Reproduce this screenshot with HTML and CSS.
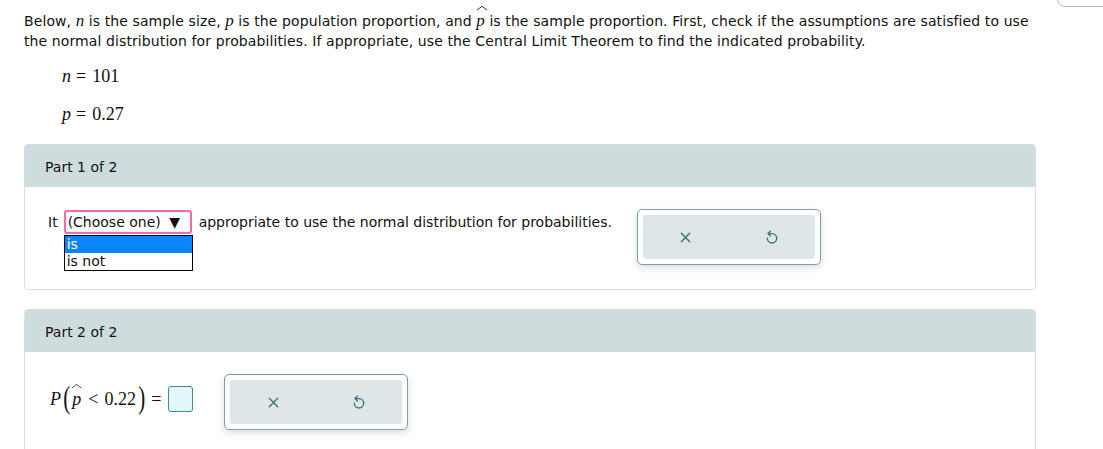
FILE: index.html
```html
<!DOCTYPE html>
<html>
<head>
<meta charset="utf-8">
<link rel="stylesheet" href="styles.css">
</head>
<body>
<div class="corner"></div>
<div class="page">
  <p class="intro"><span class="line">Below, <span class="mi">n</span> is the sample size, <span class="mi">p</span> is the population proportion, and <span class="hat"><span class="mi">p</span><svg class="hatsvg" viewBox="0 0 14 6"><path d="M1 5.5 L7 1 L13 5.5"/></svg></span> is the sample proportion. First, check if the assumptions are satisfied to use</span><span class="line">the normal distribution for probabilities. If appropriate, use the Central Limit Theorem to find the indicated probability.</span></p>
  <div class="given"><span class="mi">n</span><span class="eq">=</span>101</div>
  <div class="given"><span class="mi">p</span><span class="eq">=</span>0.27</div>

  <section class="panel">
    <div class="panel-head">Part 1 of 2</div>
    <div class="panel-body">
      <div class="sentence">
        <span>It</span>
        <span class="select-wrap">
          <span class="select">(Choose one) <span class="caret">▼</span></span>
          <span class="options">
            <span class="opt active">is</span>
            <span class="opt">is not</span>
          </span>
        </span>
        <span>appropriate to use the normal distribution for probabilities.</span>
      </div>
      <div class="tools">
        <div class="tools-inner">
          <span class="cell"><svg class="ic" viewBox="0 0 14 14"><path d="M2.5 2.5 L11.5 11.5 M11.5 2.5 L2.5 11.5" /></svg></span>
          <span class="cell"><svg class="ic undo" viewBox="0 0 14 14"><path d="M3.2 3.6 H7 A4.7 4.7 0 1 1 2.3 8.3" /><path d="M5.4 1.3 L3.1 3.6 L5.4 5.9" /></svg></span>
        </div>
      </div>
    </div>
  </section>

  <section class="panel panel2">
    <div class="panel-head">Part 2 of 2</div>
    <div class="panel-body body2">
      <div class="expr">
        <span class="mi">P</span><span class="paren">(</span><span class="hat2"><span class="mi">p</span><svg class="hatsvg2" viewBox="0 0 14 6"><path d="M1 5.5 L7 1 L13 5.5"/></svg></span><span class="lt">&lt;</span>0.22<span class="paren">)</span><span class="eq2">=</span><span class="answer"></span>
      </div>
      <div class="tools">
        <div class="tools-inner">
          <span class="cell"><svg class="ic" viewBox="0 0 14 14"><path d="M2.5 2.5 L11.5 11.5 M11.5 2.5 L2.5 11.5" /></svg></span>
          <span class="cell"><svg class="ic undo" viewBox="0 0 14 14"><path d="M3.2 3.6 H7 A4.7 4.7 0 1 1 2.3 8.3" /><path d="M5.4 1.3 L3.1 3.6 L5.4 5.9" /></svg></span>
        </div>
      </div>
    </div>
  </section>
</div>
</body>
</html>
```

FILE: styles.css
```css
html, body {
  margin: 0;
  padding: 0;
  background: #ffffff;
  overflow: hidden;
}
body {
  font-family: "DejaVu Sans", Verdana, sans-serif;
  font-size: 14px;
  color: #111;
  height: 449px;
  position: relative;
}
.corner {
  position: absolute;
  right: -20px;
  top: -40px;
  width: 64px;
  height: 45px;
  border: 1px solid #a9c0c4;
  border-radius: 8px;
}
.page {
  padding: 11px 0 0 24px;
  width: 1012px;
}
.intro {
  margin: 0;
  line-height: 20px;
  width: 1050px;
  letter-spacing: 0.1px;
}
.line {
  display: block;
  white-space: nowrap;
}
.mi {
  font-family: "Liberation Serif", "Times New Roman", serif;
  font-style: italic;
  font-size: 17px;
  line-height: 1;
  letter-spacing: 0;
}
.hat, .hat2 {
  position: relative;
  display: inline-block;
}
.hatsvg {
  position: absolute;
  left: 0px;
  top: -6px;
  width: 12px;
  height: 6px;
  fill: none;
  stroke: #222;
  stroke-width: 1.1;
}
.hatsvg2 {
  position: absolute;
  left: -1px;
  top: -6px;
  width: 11px;
  height: 6px;
  fill: none;
  stroke: #222;
  stroke-width: 1.1;
}
.given {
  font-family: "Liberation Serif", "Times New Roman", serif;
  font-size: 18px;
  margin-left: 38px;
  line-height: 20px;
  margin-top: 15px;
}
.given .mi {
  font-size: 18px;
}
.eq {
  margin: 0 6px 0 5px;
}
.given + .given {
  margin-top: 18px;
}
.panel {
  margin-top: 20px;
  border: 1px solid #d6e0e1;
  border-radius: 4px;
  overflow: hidden;
}
.panel-head {
  background: #cfdcdd;
  height: 42px;
  line-height: 44px;
  padding-left: 20px;
  font-size: 14px;
}
.panel-body {
  display: flex;
  align-items: flex-start;
  padding: 23px 0 24px 23px;
}
.sentence {
  display: flex;
  align-items: center;
  gap: 3px;
  font-size: 14px;
}
.select-wrap {
  position: relative;
  display: inline-block;
  margin-left: 3px;
  margin-right: 4px;
}
.select {
  display: inline-block;
  border: 2px solid #f06aa5;
  border-radius: 3px;
  height: 20px;
  line-height: 21px;
  padding: 0 2px;
  width: 120px;
  box-sizing: content-box;
  white-space: nowrap;
}
.caret {
  font-size: 14px;
  margin-left: 4px;
}
.options {
  position: absolute;
  top: 25px;
  left: 0;
  width: 127px;
  border: 1px solid #000;
  background: #fff;
  display: flex;
  flex-direction: column;
  z-index: 2;
}
.opt {
  height: 17px;
  line-height: 17px;
  padding-left: 2px;
}
.opt.active {
  background: #0a84ff;
  color: #fff;
}
.tools {
  margin-left: 25px;
  width: 184px;
  height: 56px;
  border: 1px solid #7f9ea6;
  border-radius: 5px;
  background: #fff;
  box-shadow: 0 3px 7px rgba(60, 90, 100, 0.2);
  padding: 5px;
  box-sizing: border-box;
  margin-top: -1px;
  flex: none;
}
.tools-inner {
  background: #dfe6e8;
  border-radius: 3px;
  height: 100%;
  display: flex;
  align-items: center;
}
.cell {
  flex: 1;
  display: flex;
  justify-content: center;
  align-items: center;
}
.ic {
  width: 13px;
  height: 13px;
  fill: none;
  stroke: #3f6f7c;
  stroke-width: 1.5;
  stroke-linecap: round;
  stroke-linejoin: round;
}
.ic.undo {
  width: 14px;
  height: 14px;
  stroke-width: 1.4;
}
.panel2 {
  margin-top: 19px;
  height: 200px;
}
.body2 {
  padding: 23px 0 0 25px;
}
.expr {
  font-family: "Liberation Serif", "Times New Roman", serif;
  font-size: 18px;
  display: flex;
  align-items: center;
  height: 50px;
  white-space: pre;
  margin-top: -1px;
}
.expr .mi {
  font-size: 18px;
}
.paren {
  font-size: 28px;
  transform: scale(0.75, 1.15);
  display: inline-block;
  margin: 0 1px;
  position: relative;
  top: -1px;
  font-weight: 300;
}
.lt {
  margin: 0 6px 0 7px;
}
.eq2 {
  margin: 0 4px 0 4px;
}
.answer {
  display: inline-block;
  width: 23px;
  height: 24px;
  border: 1px solid #3d8a9b;
  border-radius: 3px;
  background: #e5f6f9;
  margin-left: 3px;
}
.body2 .tools {
  margin-left: 31px;
}
```
